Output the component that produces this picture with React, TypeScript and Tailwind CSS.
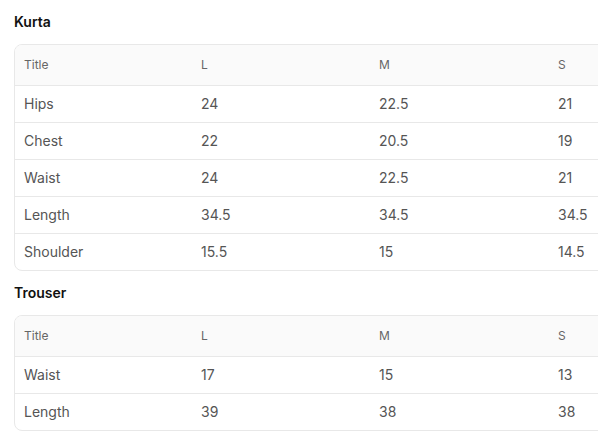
import React from "react";

const cols = ["Title", "L", "M", "S"];

function SizeTable({ rows }: { rows: string[][] }) {
  return (
    <div className="ml-[14px] w-[720px] rounded-lg border border-[#e8e8e8] overflow-hidden">
      <table className="table-fixed border-collapse w-full">
        <colgroup>
          <col className="w-[177px]" />
          <col className="w-[178px]" />
          <col className="w-[179px]" />
          <col />
        </colgroup>
        <thead>
          <tr className="bg-[#fafafa] h-[40px]">
            {cols.map((c) => (
              <th key={c} className="text-left font-normal text-[12px] text-[#666] pl-[9px] align-middle">
                {c}
              </th>
            ))}
          </tr>
        </thead>
        <tbody>
          {rows.map((r, i) => (
            <tr key={i} className="h-[37px] border-t border-[#e8e8e8]">
              {r.map((v, j) => (
                <td key={j} className="text-left text-[14px] text-[#555] pl-[9px] align-middle">
                  {v}
                </td>
              ))}
            </tr>
          ))}
        </tbody>
      </table>
    </div>
  );
}

export default function App() {
  return (
    <div className="w-[598px] h-[441px] overflow-hidden bg-white font-['Inter',sans-serif]">
      <h2 className="pl-[14px] pt-[13px] pb-[13px] text-[14px] font-semibold text-[#111] leading-[18px]">Kurta</h2>
      <SizeTable
        rows={[
          ["Hips", "24", "22.5", "21"],
          ["Chest", "22", "20.5", "19"],
          ["Waist", "24", "22.5", "21"],
          ["Length", "34.5", "34.5", "34.5"],
          ["Shoulder", "15.5", "15", "14.5"],
        ]}
      />
      <h2 className="pl-[14px] pt-[13px] pb-[13px] text-[14px] font-semibold text-[#111] leading-[18px]">Trouser</h2>
      <SizeTable
        rows={[
          ["Waist", "17", "15", "13"],
          ["Length", "39", "38", "38"],
        ]}
      />
    </div>
  );
}
